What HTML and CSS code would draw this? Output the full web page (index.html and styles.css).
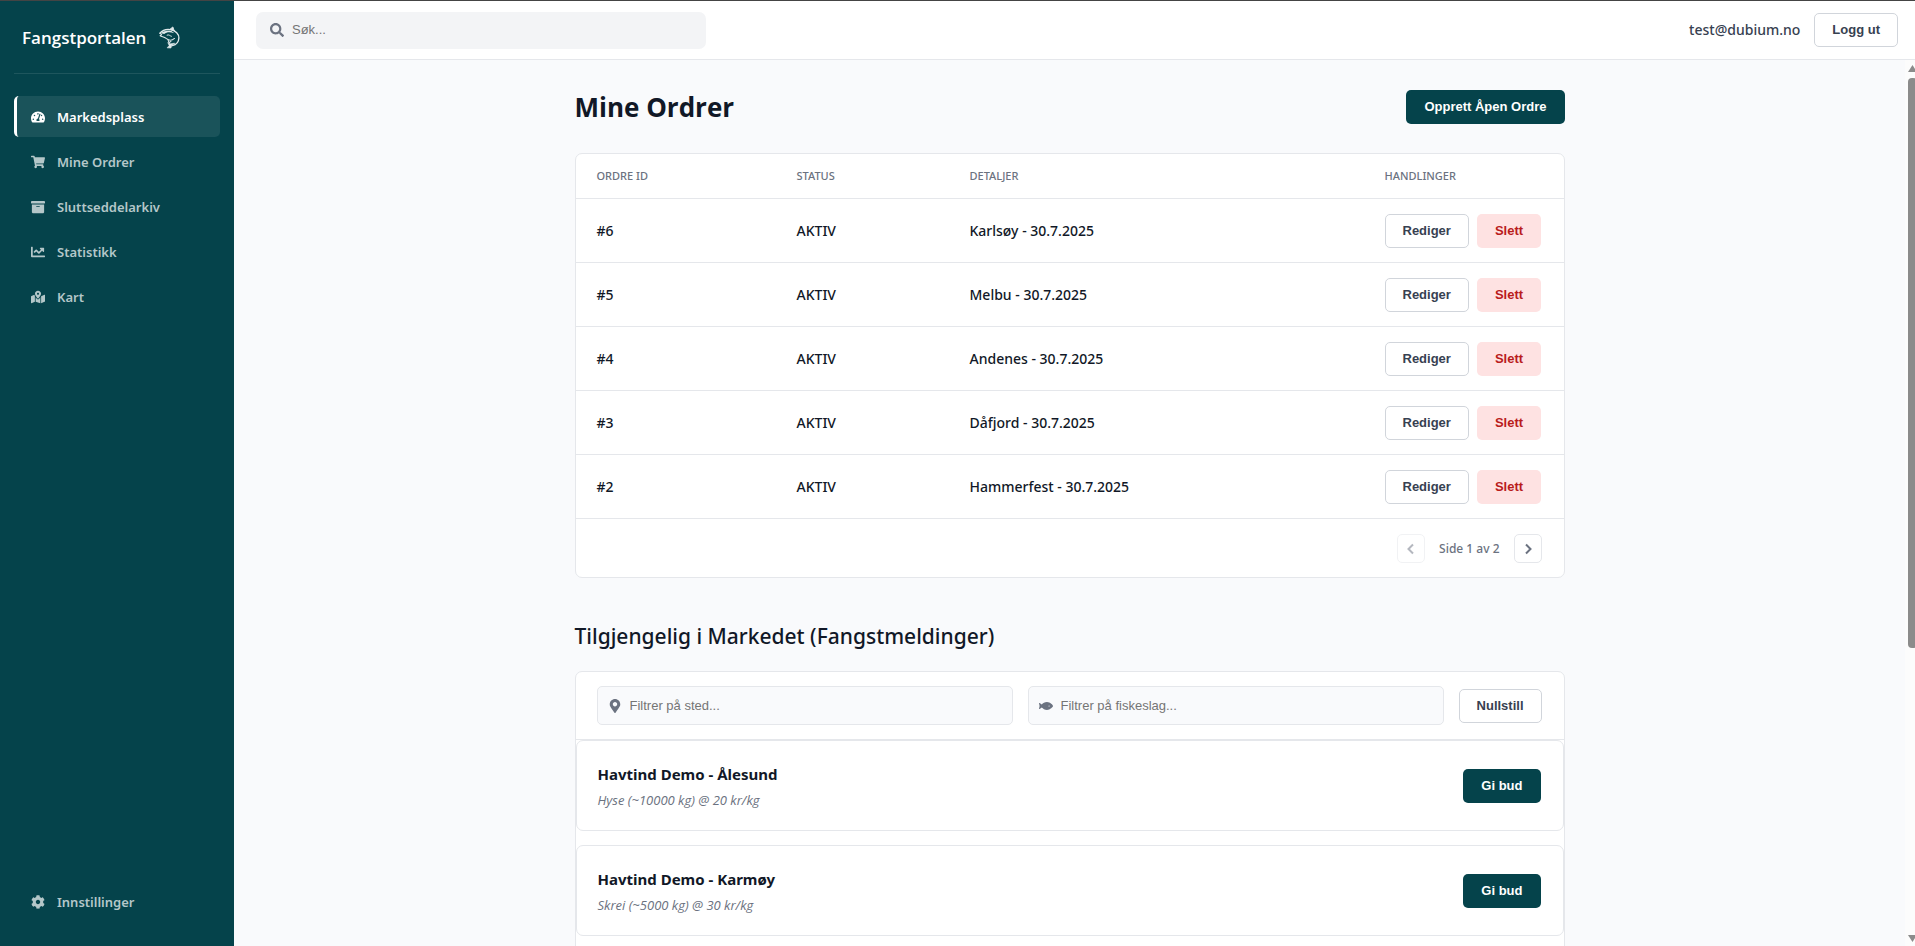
FILE: index.html
```html
<!DOCTYPE html>
<html lang="no">
<head>
<meta charset="utf-8">
<title>Fangstportalen</title>
<link rel="stylesheet" href="styles.css">
</head>
<body>
<div class="app">
  <aside class="sidebar">
    <div class="brand">
      <span class="brand-name">Fangstportalen</span>
      <svg class="brand-logo" viewBox="0 0 24 24" fill="none" stroke="#dfe8ea" stroke-linecap="round" stroke-linejoin="round" aria-hidden="true">
        <path d="M2 7.500C5 4 9 3.200 13 3.800C18.500 4.600 22 8.500 21.800 12.500C21.600 16.500 19 19.500 15 20.500" stroke-width="1.400"/>
        <path d="M2 7.500L3.800 9L2.200 10.200C4.500 11.400 6.500 11.200 8.500 13C11 15 14.500 15.400 17.200 13" stroke-width="1.100"/>
        <path d="M12 3.800L15.500 1L17 5.400" fill="#dfe8ea" stroke-width="1"/>
        <path d="M3 7.500C6 5 10 4.500 14 5.300L17 7.500C12 6 9 6.500 6.500 8.300Z" fill="#dfe8ea" stroke="none"/>
        <path d="M9.500 9.500C11.500 8.500 12.500 10.500 14 10.800" stroke-width="1"/>
        <path d="M10.500 14.500L11.500 17.500L13.500 16" stroke-width="1.100"/>
        <path d="M10.500 17.500L13 18.500L17.500 18L14.500 20L13.500 23L9.500 22.800L11.500 20.500Z" fill="#dfe8ea" stroke-width=".6"/>
      </svg>
    </div>
    <nav class="nav">
      <a class="nav-item active" href="#"><svg class="icon" viewBox="0 0 576 512"><path d="M288 32C128.940 32 0 160.940 0 320c0 52.800 14.250 102.260 39.060 144.800 5.610 9.620 16.300 15.200 27.440 15.200h443c11.140 0 21.830-5.580 27.440-15.200C561.750 422.260 576 372.800 576 320c0-159.060-128.940-288-288-288zm0 64c14.710 0 26.580 10.130 30.320 23.650-1.110 2.260-2.640 4.230-3.450 6.670l-9.220 27.670c-5.130 3.490-10.970 6.010-17.640 6.010-17.670 0-32-14.330-32-32S270.330 96 288 96zM96 384c-17.670 0-32-14.330-32-32s14.330-32 32-32 32 14.330 32 32-14.330 32-32 32zm48-160c-17.670 0-32-14.330-32-32s14.330-32 32-32 32 14.330 32 32-14.330 32-32 32zm246.770-72.410l-61.330 184C343.130 347.330 352 364.540 352 384c0 11.720-3.380 22.550-8.880 32H232.880c-5.500-9.450-8.880-20.280-8.880-32 0-33.940 26.500-61.430 59.900-63.590l61.340-184.010c4.170-12.560 17.730-19.450 30.360-15.170 12.570 4.190 19.350 17.790 15.170 30.360zm14.660 57.200l15.520-46.550c3.470-1.290 7.130-2.230 11.050-2.230 17.670 0 32 14.330 32 32s-14.330 32-32 32c-11.380-.01-20.890-6.280-26.570-15.220zM480 384c-17.670 0-32-14.330-32-32s14.330-32 32-32 32 14.330 32 32-14.330 32-32 32z"/></svg><span>Markedsplass</span></a>
      <a class="nav-item" href="#"><svg class="icon" viewBox="0 0 576 512"><path d="M528.12 301.319l47.273-208C578.806 78.301 567.391 64 551.99 64H159.208l-9.166-44.810C147.758 8.021 137.930 0 126.529 0H24C10.745 0 0 10.745 0 24v16c0 13.255 10.745 24 24 24h69.883l70.248 343.435C147.325 417.100 136 435.222 136 456c0 30.928 25.072 56 56 56s56-25.072 56-56c0-15.674-6.447-29.835-16.824-40h209.647C430.447 426.165 424 440.326 424 456c0 30.928 25.072 56 56 56s56-25.072 56-56c0-22.172-12.888-41.332-31.579-50.405l5.517-24.276c3.413-15.018-8.002-29.319-23.403-29.319H218.117l-6.545-32h293.145c11.206 0 20.920-7.754 23.403-18.681z"/></svg><span>Mine Ordrer</span></a>
      <a class="nav-item" href="#"><svg class="icon" viewBox="0 0 512 512"><path d="M32 448c0 17.700 14.300 32 32 32h384c17.700 0 32-14.300 32-32V160H32v288zm160-212c0-6.600 5.400-12 12-12h104c6.600 0 12 5.400 12 12v8c0 6.600-5.400 12-12 12H204c-6.600 0-12-5.400-12-12v-8zM480 32H32C14.300 32 0 46.300 0 64v48c0 8.800 7.200 16 16 16h480c8.800 0 16-7.200 16-16V64c0-17.700-14.300-32-32-32z"/></svg><span>Sluttseddelarkiv</span></a>
      <a class="nav-item" href="#"><svg class="icon" viewBox="0 0 512 512"><path d="M496 384H64V80c0-8.840-7.160-16-16-16H16C7.160 64 0 71.160 0 80v336c0 17.670 14.330 32 32 32h464c8.840 0 16-7.160 16-16v-32c0-8.840-7.160-16-16-16zM464 96H345.940c-21.380 0-32.090 25.850-16.970 40.970l32.400 32.400L288 242.750l-73.370-73.370c-12.500-12.500-32.760-12.500-45.250 0l-68.690 68.690c-6.250 6.250-6.250 16.380 0 22.630l22.620 22.620c6.250 6.250 16.380 6.250 22.630 0L192 237.250l73.370 73.370c12.500 12.500 32.760 12.500 45.250 0l96-96 32.400 32.400c15.120 15.120 40.970 4.410 40.970-16.970V112c.01-8.840-7.150-16-15.990-16z"/></svg><span>Statistikk</span></a>
      <a class="nav-item" href="#"><svg class="icon" viewBox="0 0 576 512"><path d="M288 0c-69.590 0-126 56.410-126 126 0 56.260 82.350 158.800 113.900 196.020 6.390 7.540 17.820 7.540 24.200 0C331.650 284.800 414 182.260 414 126 414 56.410 357.590 0 288 0zm0 168c-23.200 0-42-18.800-42-42s18.800-42 42-42 42 18.800 42 42-18.800 42-42 42zM20.120 215.950A32.006 32.006 0 0 0 0 245.660v250.320c0 11.320 11.430 19.060 21.940 14.860L160 448V214.920c-8.840-15.980-16.070-31.540-21.250-46.420L20.120 215.950zM288 359.670c-14.070 0-27.380-6.180-36.510-16.960-19.660-23.200-40.570-49.620-59.490-76.720v182l192 64V266c-18.920 27.090-39.820 53.520-59.490 76.720-9.130 10.770-22.440 16.950-36.510 16.950zm266.060-198.510L416 224v288l139.880-55.950A31.996 31.996 0 0 0 576 426.340V176.020c0-11.320-11.430-19.060-21.940-14.860z"/></svg><span>Kart</span></a>
      <a class="nav-item nav-bottom" href="#"><svg class="icon" viewBox="0 0 512 512"><path d="M487.4 315.700l-42.600-24.600c4.300-23.200 4.300-47 0-70.200l42.600-24.600c4.900-2.800 7.100-8.600 5.500-14-11.100-35.600-30-67.800-54.700-94.600-3.800-4.100-10-5.100-14.800-2.300L380.800 110c-17.900-15.400-38.500-27.300-60.800-35.100V25.800c0-5.600-3.900-10.500-9.400-11.700-36.700-8.200-74.300-7.800-109.200 0-5.500 1.200-9.400 6.100-9.400 11.700V75c-22.200 7.900-42.800 19.800-60.800 35.100L88.700 85.500c-4.900-2.800-11-1.900-14.800 2.300-24.700 26.700-43.600 58.900-54.700 94.600-1.700 5.400.6 11.200 5.500 14L67.300 221c-4.300 23.200-4.300 47 0 70.200l-42.600 24.600c-4.900 2.800-7.100 8.600-5.500 14 11.100 35.600 30 67.800 54.700 94.600 3.800 4.100 10 5.100 14.800 2.300l42.600-24.600c17.900 15.400 38.500 27.300 60.800 35.100v49.200c0 5.600 3.900 10.500 9.400 11.700 36.700 8.200 74.300 7.800 109.200 0 5.500-1.200 9.400-6.100 9.400-11.700v-49.200c22.200-7.900 42.800-19.800 60.800-35.100l42.600 24.600c4.900 2.800 11 1.900 14.800-2.300 24.700-26.700 43.600-58.900 54.700-94.600 1.500-5.500-.7-11.300-5.600-14.100zM256 336c-44.100 0-80-35.900-80-80s35.900-80 80-80 80 35.900 80 80-35.900 80-80 80z"/></svg><span>Innstillinger</span></a>
    </nav>
  </aside>

  <div class="workspace">
    <header class="topbar">
      <label class="search">
        <svg class="icon" viewBox="0 0 512 512"><path d="M505 442.700L405.300 343c-4.500-4.500-10.600-7-17-7H372c27.600-35.300 44-79.700 44-128C416 93.100 322.900 0 208 0S0 93.100 0 208s93.100 208 208 208c48.300 0 92.700-16.400 128-44v16.300c0 6.400 2.500 12.500 7 17l99.700 99.700c9.400 9.400 24.600 9.400 33.900 0l28.300-28.300c9.400-9.400 9.400-24.600.1-34zM208 336c-70.700 0-128-57.200-128-128 0-70.700 57.200-128 128-128 70.700 0 128 57.200 128 128 0 70.700-57.200 128-128 128z"/></svg>
        <input type="text" placeholder="Søk..." aria-label="Søk">
      </label>
      <div class="account">
        <span class="email">test@dubium.no</span>
        <button class="btn btn-outline" type="button">Logg ut</button>
      </div>
    </header>

    <div class="viewport">
      <main class="page">
        <div class="container">
          <div class="page-head">
            <h1>Mine Ordrer</h1>
            <button class="btn btn-primary" type="button">Opprett Åpen Ordre</button>
          </div>

          <section class="card">
            <table class="orders">
              <colgroup><col class="col-id"><col class="col-status"><col class="col-details"><col class="col-actions"></colgroup>
              <thead>
                <tr><th>Ordre ID</th><th>Status</th><th>Detaljer</th><th>Handlinger</th></tr>
              </thead>
              <tbody>
                <tr><td>#6</td><td>AKTIV</td><td>Karlsøy - 30.7.2025</td><td><div class="actions"><button class="btn btn-outline" type="button">Rediger</button><button class="btn btn-danger" type="button">Slett</button></div></td></tr>
                <tr><td>#5</td><td>AKTIV</td><td>Melbu - 30.7.2025</td><td><div class="actions"><button class="btn btn-outline" type="button">Rediger</button><button class="btn btn-danger" type="button">Slett</button></div></td></tr>
                <tr><td>#4</td><td>AKTIV</td><td>Andenes - 30.7.2025</td><td><div class="actions"><button class="btn btn-outline" type="button">Rediger</button><button class="btn btn-danger" type="button">Slett</button></div></td></tr>
                <tr><td>#3</td><td>AKTIV</td><td>Dåfjord - 30.7.2025</td><td><div class="actions"><button class="btn btn-outline" type="button">Rediger</button><button class="btn btn-danger" type="button">Slett</button></div></td></tr>
                <tr><td>#2</td><td>AKTIV</td><td>Hammerfest - 30.7.2025</td><td><div class="actions"><button class="btn btn-outline" type="button">Rediger</button><button class="btn btn-danger" type="button">Slett</button></div></td></tr>
              </tbody>
            </table>
            <div class="pager">
              <button class="page-btn" type="button" disabled aria-label="Forrige side"><svg viewBox="0 0 14 14"><path d="M9 2.500L4.500 7L9 11.500"/></svg></button>
              <span>Side 1 av 2</span>
              <button class="page-btn" type="button" aria-label="Neste side"><svg viewBox="0 0 14 14"><path d="M5 2.500L9.500 7L5 11.500"/></svg></button>
            </div>
          </section>

          <h2>Tilgjengelig i Markedet (Fangstmeldinger)</h2>

          <section class="card">
            <div class="filters">
              <label class="filter">
                <svg class="icon" viewBox="0 0 384 512"><path d="M172.268 501.670C26.970 291.031 0 269.413 0 192 0 85.961 85.961 0 192 0s192 85.961 192 192c0 77.413-26.970 99.031-172.268 309.670-9.535 13.774-29.930 13.773-39.464 0zM192 272c44.183 0 80-35.817 80-80s-35.817-80-80-80-80 35.817-80 80 35.817 80 80 80z"/></svg>
                <input type="text" placeholder="Filtrer på sted..." aria-label="Filtrer på sted">
              </label>
              <label class="filter">
                <svg class="icon" viewBox="0 0 576 512"><path d="M327.100 96c-89.970 0-168.540 54.770-212.270 101.630L27.500 131.580c-12.130-9.180-30.240.6-27.140 14.660L24.540 256 .35 365.770c-3.100 14.060 15.010 23.830 27.140 14.660l87.330-66.050C158.550 361.230 237.130 416 327.100 416 464.560 416 576 288 576 256S464.560 96 327.100 96zm87.430 184c-13.250 0-24-10.750-24-24s10.750-24 24-24 24 10.750 24 24-10.740 24-24 24z"/></svg>
                <input type="text" placeholder="Filtrer på fiskeslag..." aria-label="Filtrer på fiskeslag">
              </label>
              <button class="btn btn-outline" type="button">Nullstill</button>
            </div>
            <div class="listings">
              <article class="listing">
                <div><h3>Havtind Demo - Ålesund</h3><p>Hyse (~10000 kg) @ 20 kr/kg</p></div>
                <button class="btn btn-primary" type="button">Gi bud</button>
              </article>
              <article class="listing">
                <div><h3>Havtind Demo - Karmøy</h3><p>Skrei (~5000 kg) @ 30 kr/kg</p></div>
                <button class="btn btn-primary" type="button">Gi bud</button>
              </article>
            </div>
          </section>
        </div>
      </main>
      <div class="scrollbar" aria-hidden="true">
        <span class="arrow arrow-up"></span>
        <span class="thumb"></span>
        <span class="arrow arrow-down"></span>
      </div>
    </div>
  </div>
</div>
</body>
</html>
```
FILE: styles.css
```css
:root {
  --teal: #05434b;
  --ink: #111827;
  --slate: #374151;
  --muted: #6b7280;
  --line: #e5e7eb;
  --bg: #f9fafc;
}

* { box-sizing: border-box; }

body {
  margin: 0;
  color: var(--ink);
  background: var(--bg);
  font: 14px/20px "Noto Sans", "Open Sans", sans-serif;
}

h1, h2, h3, p { margin: 0; }

.app {
  display: flex;
  height: 100vh;
  overflow: hidden;
  border-top: 1px solid #444;
}

.icon {
  flex: none;
  width: 14px;
  height: 14px;
  fill: currentColor;
}

/* Sidebar */
.sidebar {
  display: flex;
  flex-direction: column;
  flex: none;
  width: 234px;
  padding: 14px;
  background: var(--teal);
}

.brand {
  display: flex;
  align-items: center;
  gap: 12px;
  height: 59px;
  padding: 0 8px 13px;
  border-bottom: 1px solid #1e565d;
}

.brand-name {
  color: #fff;
  font-family: "Open Sans", "Noto Sans", sans-serif;
  font-size: 17px;
  font-weight: 600;
}

.brand-logo {
  width: 23px;
  height: 23px;
}

.nav {
  display: flex;
  flex: 1;
  flex-direction: column;
  gap: 4px;
  padding-top: 22px;
}

.nav-item {
  display: flex;
  align-items: center;
  gap: 12px;
  height: 41px;
  padding: 0 14px;
  border-left: 3px solid transparent;
  border-radius: 5px;
  color: #b4c7c9;
  font-size: 13px;
  font-weight: 600;
  text-decoration: none;
}

.nav-item.active {
  border-left-color: #fff;
  background: #1a535a;
  color: #fff;
}

.nav-bottom {
  margin-top: auto;
  margin-bottom: 10px;
}

/* Top bar */
.workspace {
  display: flex;
  flex: 1;
  flex-direction: column;
  min-width: 0;
}

.topbar {
  display: flex;
  flex: none;
  align-items: center;
  justify-content: space-between;
  height: 59px;
  padding: 0 17px 0 22px;
  border-bottom: 1px solid var(--line);
  background: #fff;
}

.search {
  display: flex;
  align-items: center;
  gap: 8px;
  width: 450px;
  height: 37px;
  padding: 0 14px;
  border-radius: 7px;
  background: #f3f4f6;
  color: var(--muted);
}

input {
  flex: 1;
  min-width: 0;
  padding: 0;
  border: 0;
  outline: 0;
  background: transparent;
  color: var(--ink);
  font: 13px/16px "Liberation Sans", Arial, sans-serif;
}

input::placeholder { color: #757575; }

.account {
  display: flex;
  align-items: center;
  gap: 14px;
}

.email {
  color: var(--slate);
  font-size: 14px;
  font-weight: 500;
}

/* Buttons */
.btn {
  flex: none;
  height: 34px;
  padding: 0 17px;
  border: 1px solid transparent;
  border-radius: 5px;
  font: bold 13px/16px "Liberation Sans", Arial, sans-serif;
}

.btn-primary {
  background: var(--teal);
  color: #fff;
}

.btn-outline {
  border-color: #d1d5db;
  background: #fff;
  color: var(--slate);
}

.btn-danger {
  background: #fee2e2;
  color: #b91c1c;
}

/* Page */
.viewport {
  display: flex;
  flex: 1;
  min-height: 0;
}

.page {
  flex: 1;
  padding: 30px 22px 0;
  overflow: hidden;
}

.container {
  max-width: 990px;
  margin: 0 auto;
}

.page-head {
  display: flex;
  align-items: center;
  justify-content: space-between;
  margin-bottom: 29px;
}

h1 {
  font-family: "Open Sans", "Noto Sans", sans-serif;
  font-size: 26px;
  font-weight: 700;
  line-height: 34px;
}

h2 {
  margin: 43px 0 20px;
  font-size: 21px;
  font-weight: 500;
  line-height: 30px;
}

.card {
  border: 1px solid var(--line);
  border-radius: 7px;
  background: #fff;
}

.orders {
  width: 100%;
  table-layout: fixed;
  border-spacing: 0;
}

.col-id { width: 200px; }
.col-status { width: 173px; }
.col-actions { width: 200px; }

.orders th,
.orders td {
  padding: 0 0 0 21px;
  border-bottom: 1px solid var(--line);
  text-align: left;
}

.orders th {
  height: 45px;
  color: var(--muted);
  font-size: 11px;
  font-weight: 500;
  text-transform: uppercase;
}

.orders td {
  height: 64px;
  font-size: 14px;
  font-weight: 500;
}

.actions {
  display: flex;
  gap: 8px;
}

.pager {
  display: flex;
  align-items: center;
  justify-content: flex-end;
  gap: 14px;
  padding: 15px 22px 14px;
  color: var(--muted);
  font-size: 12px;
  font-weight: 500;
}

.page-btn {
  display: flex;
  align-items: center;
  justify-content: center;
  width: 28px;
  height: 29px;
  padding: 0;
  border: 1px solid var(--line);
  border-radius: 5px;
  background: #fff;
}

.page-btn:disabled { opacity: .5; }

.page-btn svg {
  width: 14px;
  height: 14px;
  fill: none;
  stroke: var(--muted);
  stroke-width: 2;
}

/* Market */
.filters {
  display: flex;
  align-items: center;
  gap: 15px;
  padding: 14px 22px 14px 21px;
  border-bottom: 1px solid var(--line);
}

.filter {
  display: flex;
  flex: 1;
  align-items: center;
  gap: 8px;
  height: 39px;
  padding: 0 10px;
  border: 1px solid var(--line);
  border-radius: 5px;
  background: var(--bg);
  color: var(--muted);
}

.listings {
  display: flex;
  flex-direction: column;
  gap: 14px;
  padding-bottom: 105px;
}

.listing {
  display: flex;
  align-items: center;
  justify-content: space-between;
  height: 91px;
  padding: 0 22px 0 21px;
  border: 1px solid var(--line);
  border-radius: 7px;
}

.listing h3 {
  font-size: 15px;
  font-weight: 700;
  line-height: 24px;
}

.listing p {
  margin-top: 4px;
  color: var(--muted);
  font-family: "Open Sans", "Noto Sans", sans-serif;
  font-size: 13px;
  font-style: italic;
  line-height: 20px;
}

/* Scrollbar */
.scrollbar {
  display: flex;
  flex: none;
  flex-direction: column;
  width: 10px;
  padding: 5px 0 4px 3px;
  overflow: hidden;
  background: #fcfcfc;
}

.arrow {
  width: 9px;
  height: 7px;
  background: #8b8b8b;
}

.arrow-up { clip-path: polygon(50% 0, 100% 100%, 0 100%); }

.arrow-down {
  margin-top: auto;
  clip-path: polygon(0 0, 100% 0, 50% 100%);
}

.thumb {
  width: 9px;
  height: 65%;
  margin-top: 6px;
  border-radius: 4px;
  background: #8b8b8b;
}
```
